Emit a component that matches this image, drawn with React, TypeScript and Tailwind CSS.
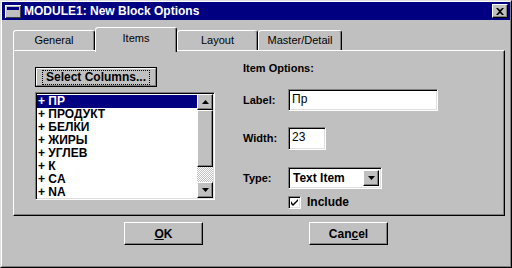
import React from "react";

// Win95-style bevels
const raised =
  "border border-t-white border-l-white border-r-black border-b-black shadow-[inset_-1px_-1px_0_#808080]";
const sunken =
  "border border-t-[#808080] border-l-[#808080] border-r-white border-b-white shadow-[inset_1px_1px_0_#000,inset_-1px_-1px_0_#dfdfdf]";

const columns = ["ПР", "ПРОДУКТ", "БЕЛКИ", "ЖИРЫ", "УГЛЕВ", "К", "CA", "NA"];

function ArrowBtn({ down }: { down?: boolean }) {
  return (
    <div className={`w-[16px] h-[16px] bg-[#c0c0c0] flex items-center justify-center ${raised}`}>
      <svg width="7" height="4" viewBox="0 0 7 4">
        {down ? <path d="M0 0h7L3.5 4z" fill="#000" /> : <path d="M0 4h7L3.5 0z" fill="#000" />}
      </svg>
    </div>
  );
}

function Tab({ label, w, active }: { label: string; w: string; active?: boolean }) {
  return (
    <div
      className={`${w} ${
        active ? "h-[25px] -mb-[2px] relative z-10" : "h-[20px]"
      } bg-[#c0c0c0] border-t border-l border-r border-t-white border-l-white border-r-black rounded-t-[3px] shadow-[inset_-1px_0_0_#808080] flex items-center justify-center text-[11px] ${
        active ? "pb-[3px]" : ""
      }`}
    >
      {label}
    </div>
  );
}

export default function App() {
  return (
    <div className="w-[512px] h-[268px] bg-[#c0c0c0] border border-t-[#dfdfdf] border-l-[#dfdfdf] border-r-black border-b-black font-['Liberation_Sans',Arial,sans-serif] text-black select-none">
      <div className="h-full border border-t-white border-l-white border-r-[#808080] border-b-[#808080] flex flex-col">
        {/* Title bar */}
        <div className="h-[18px] bg-[#000080] flex items-center pl-[3px] pr-[2px]">
          <svg width="16" height="13" viewBox="0 0 16 13">
            <rect x="0" y="0" width="16" height="13" fill="#c0c0c0" />
            <path d="M0 0h16v1H1v12H0z" fill="#fff" />
            <path d="M15 1h1v12H1v-1h14z" fill="#404040" />
            <rect x="2" y="2" width="12" height="3" fill="#000080" />
            <rect x="2" y="6" width="12" height="5" fill="#c0c0c0" />
          </svg>
          <span className="ml-[3px] text-white font-bold text-[12px] leading-none">
            MODULE1: New Block Options
          </span>
          <div className={`ml-auto w-[16px] h-[14px] bg-[#c0c0c0] flex items-center justify-center ${raised}`}>
            <svg width="8" height="7" viewBox="0 0 8 7">
              <path d="M0 0h2l2 2 2-2h2L5 3.5 8 7H6L4 5 2 7H0l3-3.5z" fill="#000" />
            </svg>
          </div>
        </div>

        {/* Tabs */}
        <div className="mt-[7px] ml-[11px] h-[23px] flex items-end">
          <Tab label="General" w="w-[82px]" />
          <Tab label="Items" w="w-[82px]" active />
          <Tab label="Layout" w="w-[81px]" />
          <Tab label="Master/Detail" w="w-[84px]" />
        </div>

        {/* Panel */}
        <div className={`ml-[11px] w-[492px] h-[166px] flex pl-[21px] pt-[11px] ${raised}`}>
          <div className="w-[180px] mt-[5px] flex flex-col">
            <button className="w-[122px] h-[20px] border border-black bg-[#c0c0c0] p-0">
              <div className="h-full border border-t-white border-l-white border-r-[#808080] border-b-[#808080] flex items-center justify-center">
                <span className="text-[12px] font-bold leading-[13px] outline outline-1 outline-dotted outline-black px-[3px]">
                  Select Columns...
                </span>
              </div>
            </button>
            <div className={`mt-[5px] h-[108px] bg-white flex p-[1px] ${sunken}`}>
              <div className="flex-1 pt-[1px]">
                {columns.map((c, i) => (
                  <div
                    key={c}
                    className={`h-[13px] leading-[13px] text-[12px] font-bold pl-[1px] whitespace-nowrap ${
                      i === 0 ? "bg-[#000080] text-white" : ""
                    }`}
                  >
                    + {c}
                  </div>
                ))}
              </div>
              <div className="w-[16px] flex flex-col">
                <ArrowBtn />
                <div className={`h-[57px] bg-[#c0c0c0] ${raised}`} />
                <div className="flex-1 bg-[repeating-conic-gradient(#c0c0c0_0_25%,#fff_0_50%)] bg-[length:2px_2px]" />
                <ArrowBtn down />
              </div>
            </div>
          </div>

          <div className="ml-[28px] flex flex-col">
            <div className="h-[13px] leading-[13px] text-[11px] font-bold">Item Options:</div>
            <div className="mt-[14px] flex items-center">
              <span className="w-[45px] text-[11px] font-bold">Label:</span>
              <div className={`w-[150px] h-[22px] bg-white text-[12px] leading-[18px] pl-[3px] ${sunken}`}>Пр</div>
            </div>
            <div className="mt-[16px] flex items-center">
              <span className="w-[45px] text-[11px] font-bold">Width:</span>
              <div className={`w-[38px] h-[23px] bg-white text-[12px] leading-[18px] pl-[3px] ${sunken}`}>23</div>
            </div>
            <div className="mt-[17px] flex items-center">
              <span className="w-[45px] text-[11px] font-bold">Type:</span>
              <div className={`w-[94px] h-[22px] bg-white flex items-center p-[2px] ${sunken}`}>
                <span className="flex-1 text-[12px] font-bold pl-[2px]">Text Item</span>
                <ArrowBtn down />
              </div>
            </div>
            <div className="mt-[4px] ml-[45px] flex items-center">
              <div className={`w-[13px] h-[13px] bg-white flex items-center justify-center ${sunken}`}>
                <svg width="7" height="7" viewBox="0 0 7 7">
                  <path d="M0 2v3l2 2 5-5V-0L2 5z" fill="#000" />
                </svg>
              </div>
              <span className="ml-[6px] text-[12px] font-bold">Include</span>
            </div>
          </div>
        </div>

        {/* Buttons */}
        <div className="mt-[6px] flex">
          <button className={`ml-[122px] w-[79px] h-[23px] bg-[#c0c0c0] text-[12px] font-bold ${raised}`}>
            <span className="underline">O</span>K
          </button>
          <button className={`ml-[106px] w-[79px] h-[23px] bg-[#c0c0c0] text-[12px] font-bold ${raised}`}>
            Can<span className="underline">c</span>el
          </button>
        </div>
      </div>
    </div>
  );
}
